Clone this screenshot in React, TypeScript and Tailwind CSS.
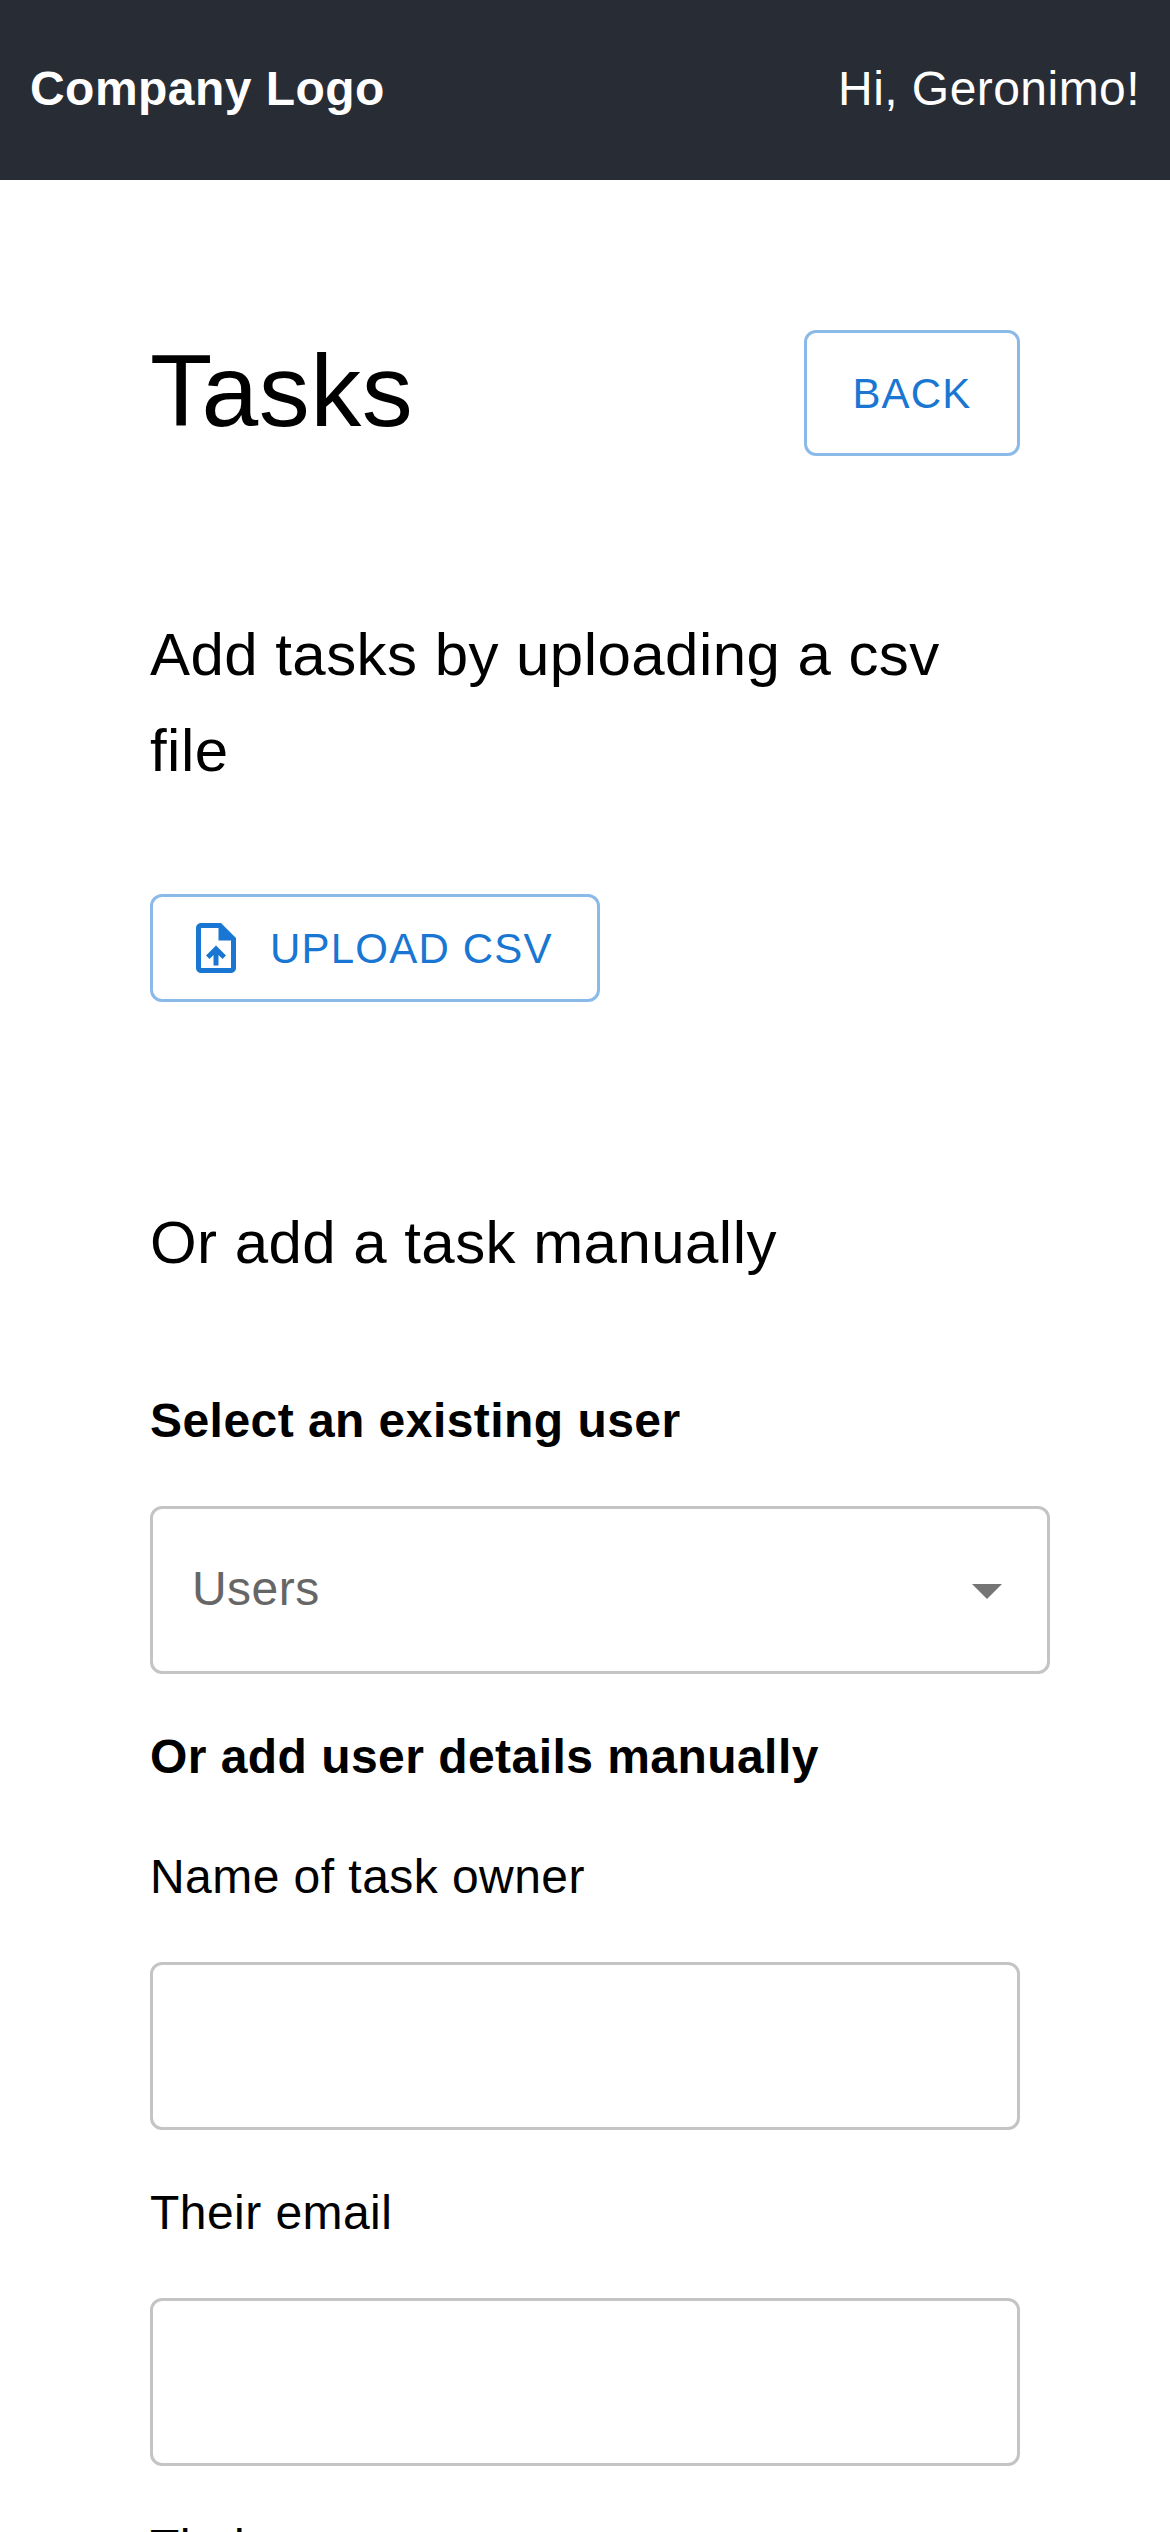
import React from "react";

function UploadIcon() {
  return (
    <svg className="size-[60px] shrink-0" viewBox="0 0 24 24" fill="currentColor">
      <path d="M14 2H6c-1.1 0-1.99.9-1.99 2L4 20c0 1.1.89 2 1.99 2H18c1.1 0 2-.9 2-2V8l-6-6zm4 18H6V4h7v5h5v11zM8 15.01l1.41 1.41L11 14.84V19h2v-4.16l1.59 1.59L16 15.01 12.01 11 8 15.01z" />
    </svg>
  );
}

function Field({ label }: { label: string }) {
  return (
    <label className="block last:-mt-[2px]">
      <span className="block h-[72px] text-[48px] leading-[72px] tracking-[0.45px]">{label}</span>
      <input className="mt-[49px] block h-[168px] w-[870px] rounded-[12px] border-[3px] border-[#c4c4c4] px-[39px] outline-none" />
    </label>
  );
}

export default function App() {
  return (
    <div className="h-[2532px] overflow-hidden bg-white font-['Liberation_Sans',Arial,sans-serif] text-black">
      <header className="flex h-[180px] items-center justify-between bg-[#282c34] px-[30px] pb-[2px] text-[48px] text-white">
        <strong className="tracking-[0.45px]">Company Logo</strong>
        <span className="tracking-[0.45px]">Hi, Geronimo!</span>
      </header>
      <main className="px-[150px]">
        <div className="flex items-center justify-between pt-[150px]">
          <h1 className="pb-[4px] text-[102px] leading-[122px] tracking-[0.5px]">Tasks</h1>
          <button className="h-[126px] w-[216px] rounded-[12px] border-[3px] border-[#8cbae8] text-[42px] tracking-[1.2px] text-[#1976d2]">BACK</button>
        </div>
        <h2 className="mt-[151px] text-[60px] leading-[96px] tracking-[0.45px]">Add tasks by uploading a csv file</h2>
        <button className="mt-[95px] flex h-[108px] w-[450px] items-center gap-[24px] rounded-[12px] border-[3px] border-[#8cbae8] pl-[33px] text-[42px] tracking-[1.2px] text-[#1976d2]">
          <UploadIcon />UPLOAD CSV
        </button>
        <h2 className="mt-[193px] text-[60px] leading-[96px] tracking-[0.45px]">Or add a task manually</h2>
        <h3 className="mt-[94px] text-[48px] font-bold leading-[72px] tracking-[0.45px]">Select an existing user</h3>
        <button className="mt-[49px] flex h-[168px] w-[900px] items-center justify-between rounded-[12px] border-[3px] border-[#c4c4c4] pr-[24px] pl-[39px] text-[48px] tracking-[0.45px] text-[#666666]">
          <span className="pb-[2px]">Users</span>
          <svg className="size-[72px]" viewBox="0 0 24 24" fill="#757575"><path d="M7 10l5 5 5-5z" /></svg>
        </button>
        <h3 className="mt-[47px] text-[48px] font-bold leading-[72px] tracking-[0.45px]">Or add user details manually</h3>
        <div className="mt-[48px] flex flex-col gap-[47px]">
          <Field label="Name of task owner" />
          <Field label="Their email" />
          <Field label="Their company" />
        </div>
      </main>
    </div>
  );
}
